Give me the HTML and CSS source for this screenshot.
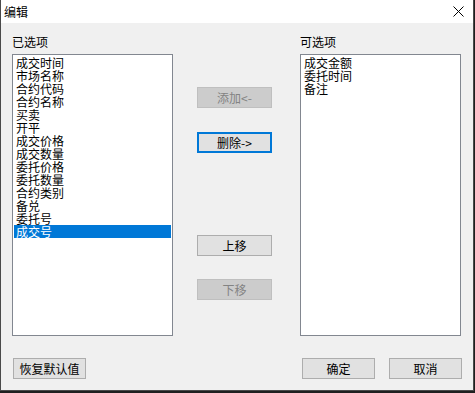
FILE: index.html
```html
<!DOCTYPE html>
<html lang="zh-CN">
<head>
  <meta charset="UTF-8" />
  <title>编辑</title>
  <link rel="stylesheet" href="styles.css">
</head>
<body>
  <div class="window">
    <div class="titlebar">
      <span class="title">编辑</span>
      <svg class="close" width="11" height="11" viewBox="0 0 11 11">
        <path d="M0.5 0.5 L10.5 10.5 M10.5 0.5 L0.5 10.5" stroke="#000" stroke-width="1" fill="none" />
      </svg>
    </div>

    <div class="client">
      <div class="columns">
        <!-- selected fields -->
        <div class="col">
          <div class="label">已选项</div>
          <ul class="listbox">
            <li>成交时间</li>
            <li>市场名称</li>
            <li>合约代码</li>
            <li>合约名称</li>
            <li>买卖</li>
            <li>开平</li>
            <li>成交价格</li>
            <li>成交数量</li>
            <li>委托价格</li>
            <li>委托数量</li>
            <li>合约类别</li>
            <li>备兑</li>
            <li>委托号</li>
            <li class="selected">成交号</li>
          </ul>
        </div>

        <!-- move buttons -->
        <div class="actions">
          <button class="btn disabled btn-add">添加&lt;-</button>
          <button class="btn focus btn-del">删除-&gt;</button>
          <button class="btn btn-up">上移</button>
          <button class="btn disabled btn-down">下移</button>
        </div>

        <!-- available fields -->
        <div class="col">
          <div class="label">可选项</div>
          <ul class="listbox">
            <li>成交金额</li>
            <li>委托时间</li>
            <li>备注</li>
          </ul>
        </div>
      </div>

      <div class="footer">
        <button class="btn small">恢复默认值</button>
        <div class="footer-right">
          <button class="btn small">确定</button>
          <button class="btn small">取消</button>
        </div>
      </div>
    </div>
  </div>
</body>
</html>
```

FILE: styles.css
```css
/* ------------------ Global ------------------ */
body {
  margin: 0;
  background: #1f1f1f;
  font-family: "Noto Sans CJK SC", "Liberation Sans", sans-serif;
  font-size: 12px;
  color: #000;
}
.window {
  width: 472px;
  height: 390px;
  border: 1px solid #4a4a4a;
  border-top: none;
  background: #f0f0f0;
  display: flex;
  flex-direction: column;
}
.titlebar {
  height: 26px;
  background: #fff;
  display: flex;
  align-items: center;
  justify-content: space-between;
  padding: 0 9px 0 3px;
}
.title {
  line-height: 13px;
  margin-top: 0;
}
.close {
  display: block;
  margin-top: -1px;
}

/* ------------------ Client area ------------------ */
.client {
  flex: 1;
  padding: 12px 12px 11px 11px;
  display: flex;
  flex-direction: column;
}
.columns {
  display: flex;
}
.col {
  width: 161px;
}
.label {
  line-height: 13px;
  margin-bottom: 6px;
}
.listbox {
  list-style: none;
  margin: 0;
  padding: 1px;
  height: 278px;
  border: 1px solid #828790;
  background: #fff;
  box-sizing: content-box;
  width: 157px;
}
.listbox li {
  line-height: 13px;
  height: 13px;
  padding-left: 2px;
  white-space: nowrap;
}
.listbox li.selected {
  background: #0078d7;
  color: #fff;
}

/* ------------------ Buttons ------------------ */
.actions {
  display: flex;
  flex-direction: column;
  margin: 0 28px 0 24px;
  padding-top: 52px;
}
.btn {
  font-family: inherit;
  font-size: 12px;
  width: 75px;
  height: 21px;
  padding: 0;
  margin: 0;
  background: #e1e1e1;
  border: 1px solid #adadad;
  color: #000;
  line-height: 17px;
}
.btn.disabled {
  background: #cccccc;
  border-color: #bfbfbf;
  color: #838383;
}
.btn.focus {
  border: 2px solid #0078d7;
}
.btn-del {
  margin-top: 24px;
}
.btn-up {
  margin-top: 82px;
}
.btn-down {
  margin-top: 23px;
}

.footer {
  display: flex;
  justify-content: space-between;
  margin-top: 22px;
  padding-left: 1px;
}
.footer-right {
  display: flex;
  gap: 14px;
  margin-right: -1px;
}
.btn.small {
  width: 73px;
}
```
